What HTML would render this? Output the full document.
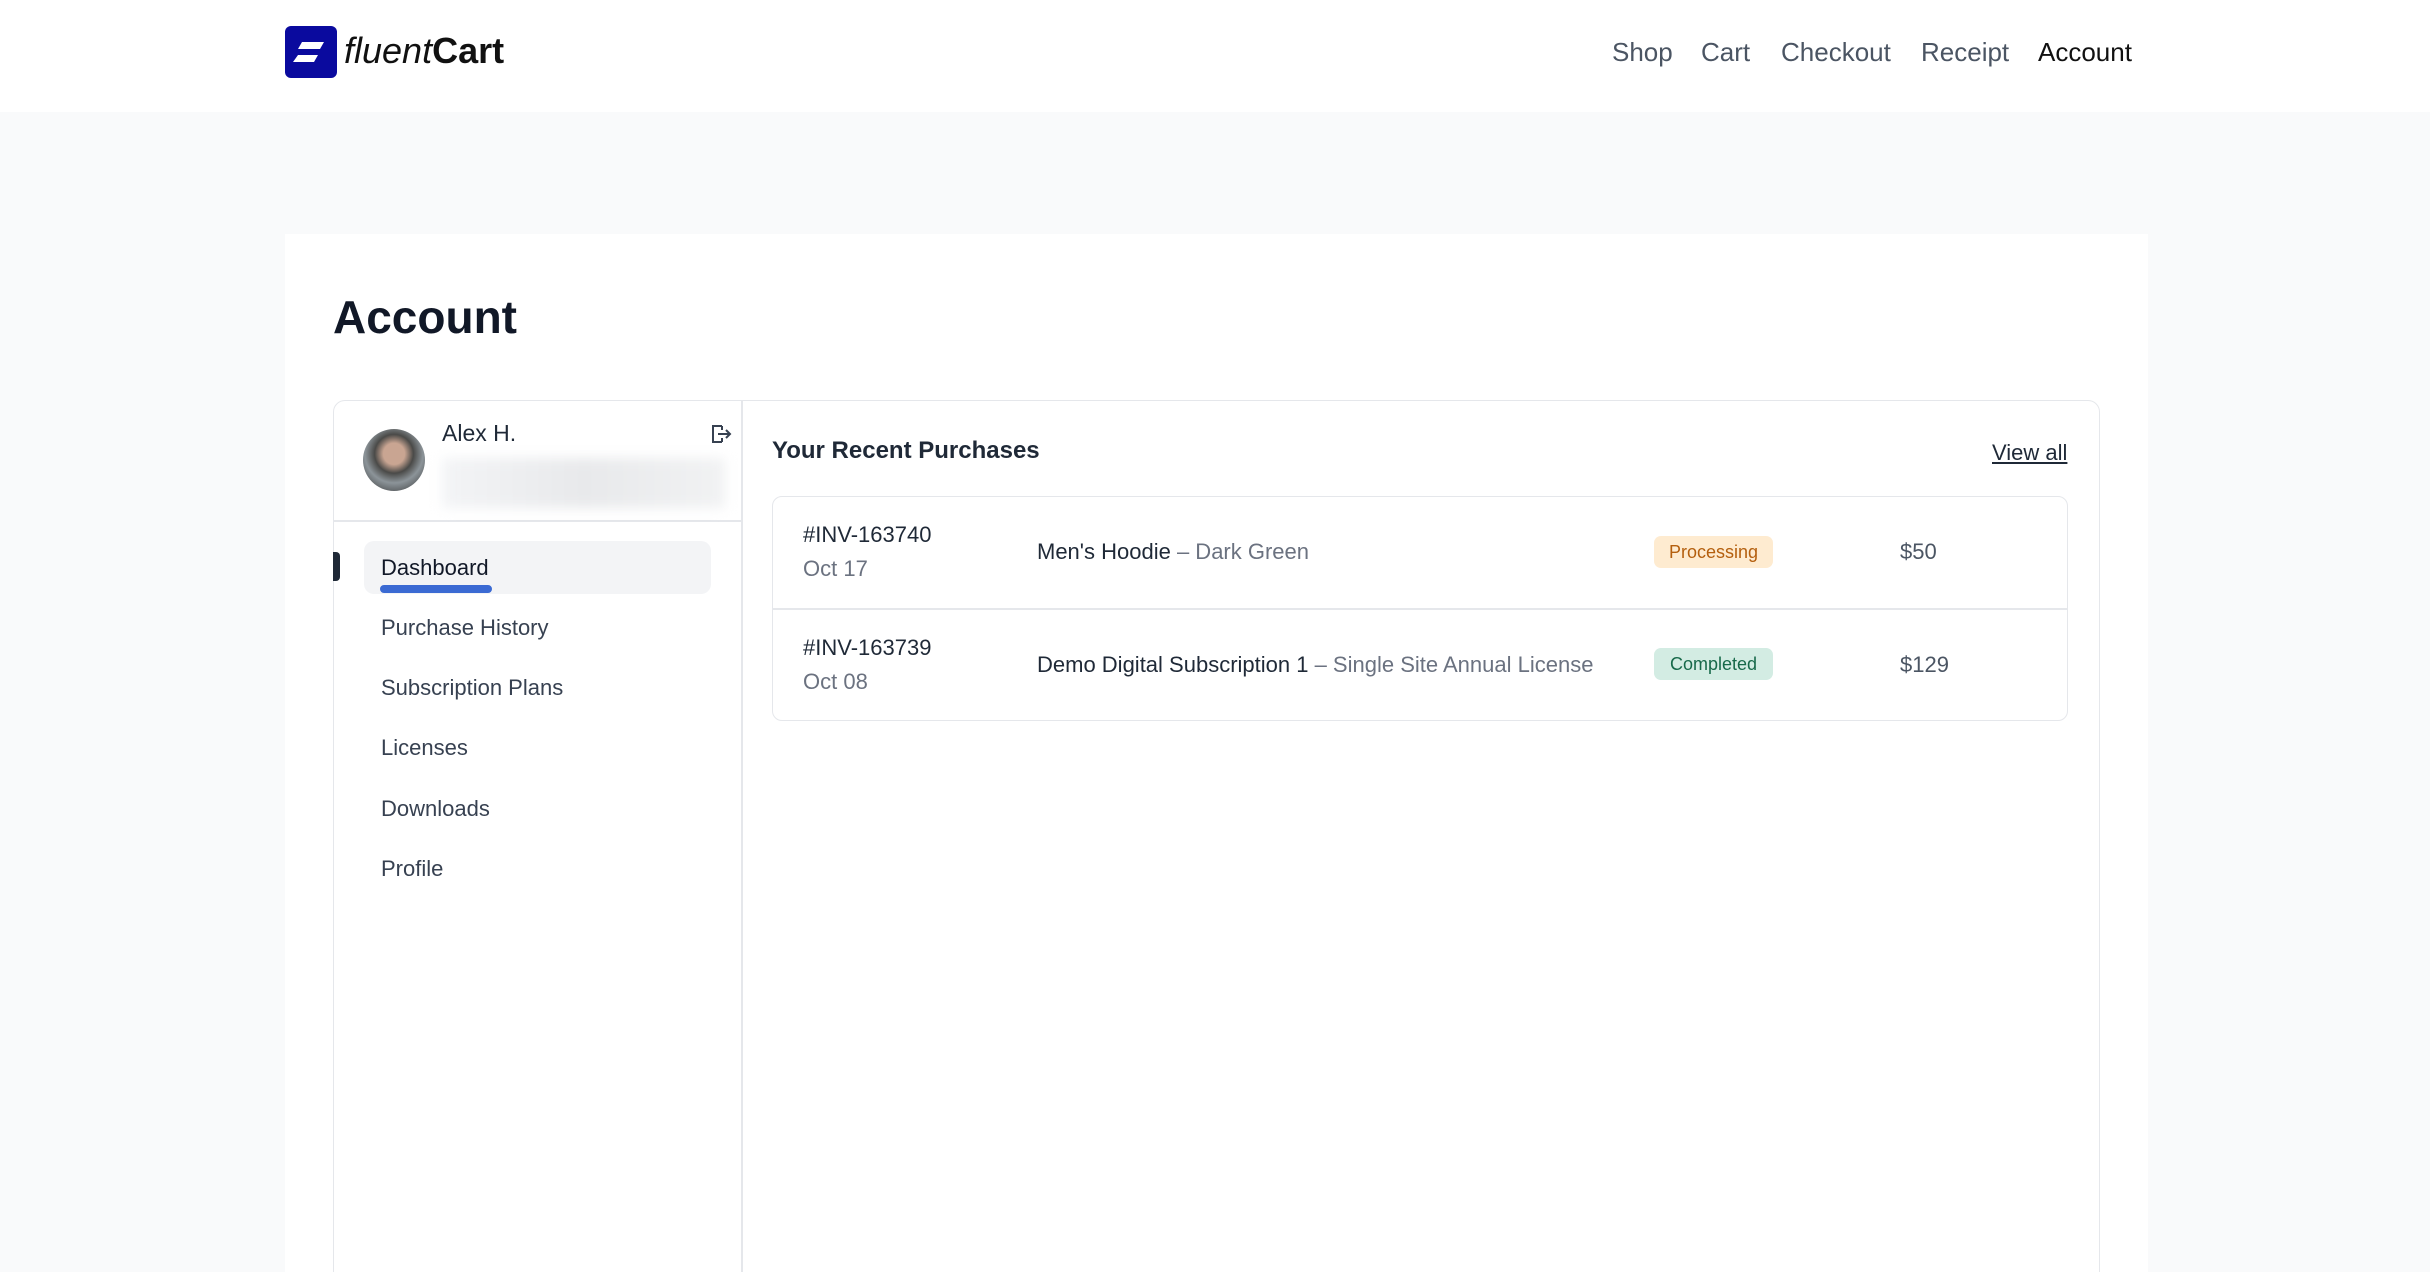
<!DOCTYPE html>
<html style="width:2430px;height:1272px;overflow:hidden"><head><meta charset="utf-8"><style>
*{box-sizing:border-box;margin:0;padding:0}
body{width:2430px;height:1272px;overflow:hidden;background:#f9fafb;font-family:"Liberation Sans",sans-serif;color:#1f2937;position:relative}
.a{position:absolute;white-space:nowrap}
header{position:absolute;left:0;top:0;width:2430px;height:112px;background:#fff}
.nav{font-size:26px;color:#4b5563;top:37px}
.side{font-size:22px;color:#374151;left:381px}
.t{font-size:22px;color:#1f2937}
.g{color:#6b7280}
</style></head><body>
<header>
<div class="a" style="left:285px;top:26px;width:52px;height:52px;background:#0a0a9e;border-radius:6px">
<svg width="52" height="52" viewBox="0 0 52 52"><path d="M17 16H39L35 23H13Z M13 29H33L29 36H8Z" fill="#fff"/></svg></div>
<div class="a" style="left:344px;top:30px;font-size:36px;color:#111"><span style="font-style:italic;font-weight:300">fluent</span><b>Cart</b></div>
<div class="a nav" style="left:1612px">Shop</div>
<div class="a nav" style="left:1701px">Cart</div>
<div class="a nav" style="left:1781px">Checkout</div>
<div class="a nav" style="left:1921px">Receipt</div>
<div class="a nav" style="left:2038px;color:#111">Account</div>
</header>
<div class="a" style="left:285px;top:234px;width:1863px;height:1038px;background:#fff"></div>
<div class="a" style="left:333px;top:290px;font-size:46px;font-weight:bold;color:#111827">Account</div>
<div class="a" style="left:333px;top:400px;width:1767px;height:872px;overflow:hidden">
<div style="position:absolute;left:0;top:0;width:1767px;height:900px;border:1.5px solid #e5e7eb;border-radius:12px;background:#fff"></div>
</div>
<div class="a" style="left:741px;top:401px;width:1.5px;height:871px;background:#e5e7eb"></div>
<div class="a" style="left:334px;top:520px;width:407px;height:1.5px;background:#e5e7eb"></div>
<div class="a" style="left:363px;top:429px;width:62px;height:62px;border-radius:50%;background:radial-gradient(circle at 50% 40%,#c9a592 0 22%,#4a4a48 40%,#8c9499 60%,#2b2b2b 100%)"></div>
<div class="a" style="left:442px;top:420px;font-size:23px;color:#1f2937">Alex H.</div>
<div class="a" style="left:442px;top:458px;width:283px;height:50px;background:linear-gradient(90deg,#f3f4f6,#e8e9eb,#f1f2f3);filter:blur(6px)"></div>
<svg class="a" style="left:710px;top:423px" width="22" height="22" viewBox="0 0 22 22" fill="none" stroke="#374151" stroke-width="2"><path d="M12 3H3V19H12M12 3V7M12 19V15M8 11H20M16 7L20 11L16 15"/></svg>
<div class="a" style="left:364px;top:541px;width:347px;height:53px;background:#f3f4f6;border-radius:10px"></div>
<div class="a" style="left:333px;top:552px;width:7px;height:29px;background:#1f2937;border-radius:0 4px 4px 0"></div>
<div class="a" style="left:380px;top:585px;width:112px;height:8px;background:#3b6ad3;border-radius:4px"></div>
<div class="a side" style="top:555px;color:#111827">Dashboard</div>
<div class="a side" style="top:615px">Purchase History</div>
<div class="a side" style="top:675px">Subscription Plans</div>
<div class="a side" style="top:735px">Licenses</div>
<div class="a side" style="top:796px">Downloads</div>
<div class="a side" style="top:856px">Profile</div>
<div class="a" style="left:772px;top:437px;font-size:24px;font-weight:bold;color:#1f2937">Your Recent Purchases</div>
<div class="a" style="left:1992px;top:440px;font-size:22px;text-decoration:underline;color:#1f2937">View all</div>
<div class="a" style="left:772px;top:496px;width:1296px;height:225px;border:1.5px solid #e5e7eb;border-radius:10px"></div>
<div class="a" style="left:773px;top:608px;width:1294px;height:1.5px;background:#e5e7eb"></div>
<div class="a t" style="left:803px;top:522px">#INV-163740</div>
<div class="a t g" style="left:803px;top:556px">Oct 17</div>
<div class="a t" style="left:1037px;top:539px">Men's Hoodie <span class="g">– Dark Green</span></div>
<div class="a" style="left:1654px;top:536px;width:119px;height:32px;background:#feebd0;border-radius:7px;color:#b45f0e;font-size:18px;text-align:center;line-height:32px">Processing</div>
<div class="a t" style="left:1900px;top:539px;color:#4b5563">$50</div>
<div class="a t" style="left:803px;top:635px">#INV-163739</div>
<div class="a t g" style="left:803px;top:669px">Oct 08</div>
<div class="a t" style="left:1037px;top:652px">Demo Digital Subscription 1 <span class="g">– Single Site Annual License</span></div>
<div class="a" style="left:1654px;top:648px;width:119px;height:32px;background:#d3ece3;border-radius:7px;color:#17694a;font-size:18px;text-align:center;line-height:32px">Completed</div>
<div class="a t" style="left:1900px;top:652px;color:#4b5563">$129</div>
</body></html>
